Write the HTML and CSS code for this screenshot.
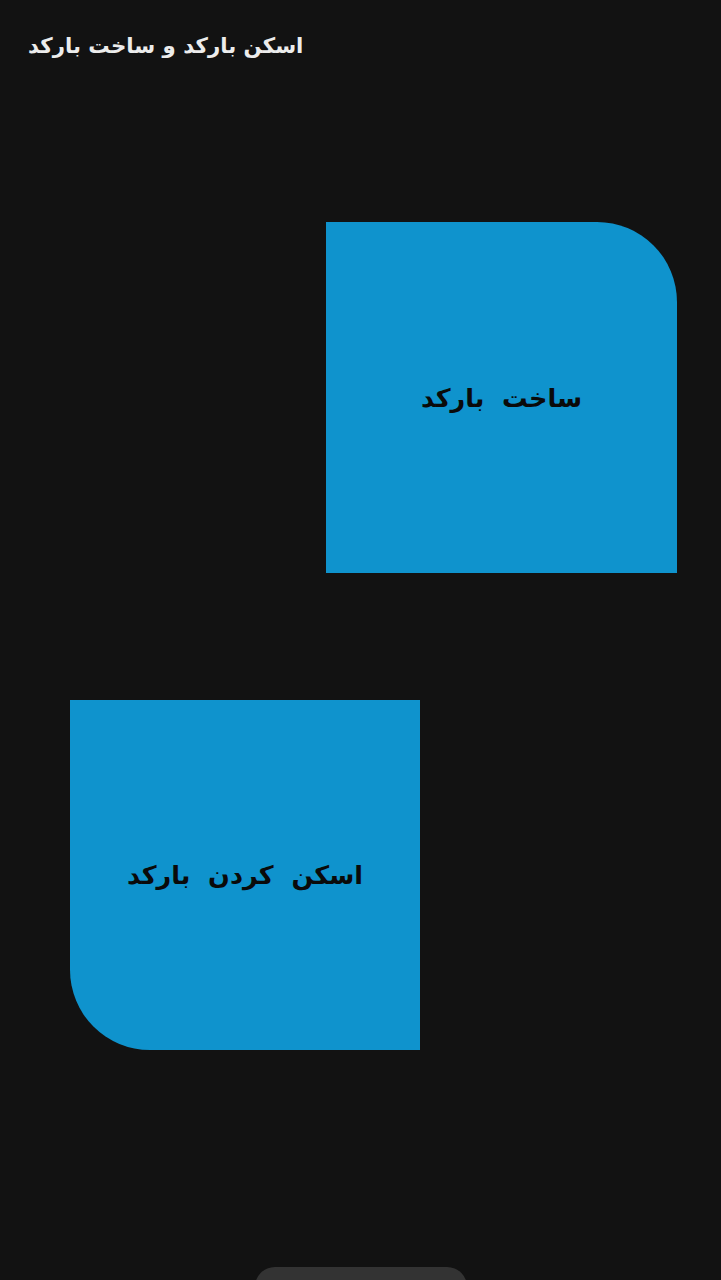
FILE: index.html
```html
<!DOCTYPE html>
<html lang="fa">
<head>
<meta charset="utf-8">
<link rel="stylesheet" href="styles.css">
</head>
<body>
<div class="screen">
  <header class="appbar"><h1 class="title" dir="rtl">اسکن بارکد و ساخت بارکد</h1></header>
  <main class="content">
    <div class="card card-make"><span class="card-label" dir="rtl">ساخت&nbsp; بارکد</span></div>
    <div class="card card-scan"><span class="card-label" dir="rtl">اسکن&nbsp; کردن&nbsp; بارکد</span></div>
  </main>
  <div class="navbar"><div class="pill"></div></div>
</div>
</body>
</html>
```
FILE: styles.css
```css
html, body {
  margin: 0;
  padding: 0;
  background: #121212;
}
.screen {
  width: 721px;
  height: 1280px;
  overflow: hidden;
  display: flex;
  flex-direction: column;
  font-family: "DejaVu Sans", "Noto Sans", sans-serif;
}
.appbar {
  flex-shrink: 0;
  height: 92px;
  display: flex;
  align-items: center;
  padding-left: 28px;
  box-sizing: border-box;
}
.title {
  margin: 0;
  font-size: 21.3px;
  font-weight: bold;
  color: #ececec;
  line-height: 1;
}
.content {
  flex-shrink: 0;
  display: flex;
  flex-direction: column;
  padding-top: 130px;
  gap: 127px;
}
.card {
  flex-shrink: 0;
  width: 351px;
  height: 351px;
  background: #0f93cd;
  display: flex;
  align-items: center;
  justify-content: center;
}
.card-make {
  margin-left: 326px;
  border-top-right-radius: 80px;
}
.card-scan {
  margin-left: 70px;
  width: 350px;
  height: 350px;
  border-bottom-left-radius: 80px;
}
.card-label {
  font-size: 25.5px;
  font-weight: bold;
  color: #0a0a0a;
}
.navbar {
  flex-shrink: 0;
  margin-top: 217px;
  display: flex;
  justify-content: center;
}
.pill {
  width: 212px;
  height: 40px;
  border-radius: 20px;
  background: #333333;
}
```
